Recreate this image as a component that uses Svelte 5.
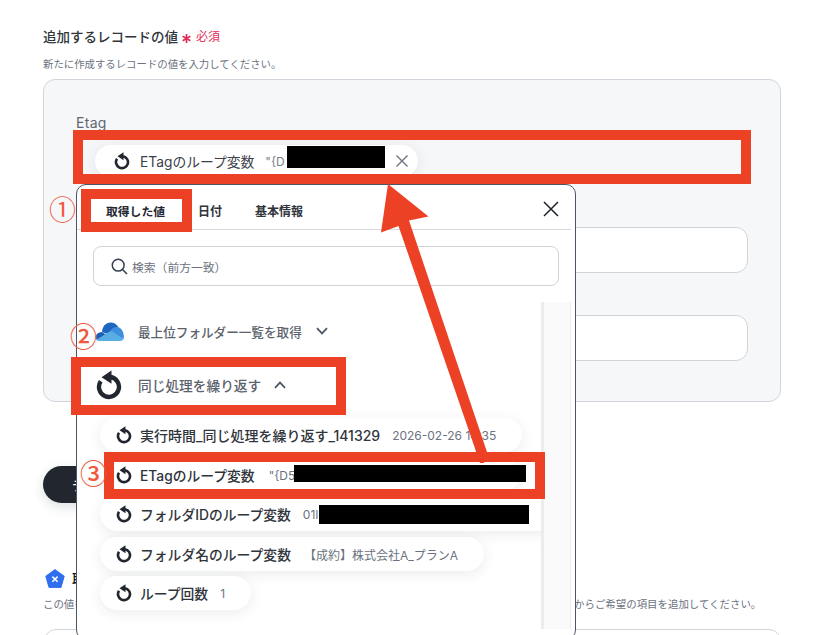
<script>
  const pills = [
    { name: '実行時間_同じ処理を繰り返す_141329', value: '2026-02-26 14:35', cls: 'p1' },
    { name: 'ETagのループ変数', value: '"{D5', cls: 'p2' },
    { name: 'フォルダIDのループ変数', value: '01I', cls: 'p3' },
    { name: 'フォルダ名のループ変数', value: '【成約】株式会社A_プランA', cls: 'p4' },
    { name: 'ループ回数', value: '1', cls: 'p5' }
  ];
</script>

{#snippet loop(size)}
  <svg class="loop" width={size} height={size} viewBox="0 0 24 24" aria-hidden="true">
    <path d="M13 5.600 A8 8 0 1 1 5.400 9" fill="none" stroke="#22262e" stroke-width="3.500"/>
    <path d="M14 0.400 V11 L6 5.700 Z" fill="#22262e"/>
  </svg>
{/snippet}

<div class="page">
  <h2 class="title">追加するレコードの値
    <svg class="star" width="9" height="9" viewBox="0 0 9 9"><path d="M4.500 0V9M.6 2.200 8.400 6.800M8.400 2.200 .6 6.800" stroke="#e0315c" stroke-width="1.700"/></svg>
    <span class="req">必須</span>
  </h2>
  <p class="sub">新たに作成するレコードの値を入力してください。</p>

  <section class="panel">
    <div class="label">Etag</div>
    <div class="field first">
      <div class="chip">
        {@render loop(18)}
        <span class="cname">ETagのループ変数</span>
        <span class="cval">"{'{'}D</span>
        <svg class="cx" width="14" height="14" viewBox="0 0 14 14"><path d="M1.500 1.500 12.500 12.500M12.500 1.500 1.500 12.500" stroke="#6b7280" stroke-width="1.400"/></svg>
      </div>
    </div>
    <div class="field second"></div>
    <div class="field third"></div>
  </section>

  <button class="primary">テスト</button>

  <div class="sect">
    <svg width="20" height="20" viewBox="0 0 20 20"><path d="M10 .6 19.200 7.200 16 18.400 4 18.400 .8 7.200Z" fill="#2f6fed" stroke="#2f6fed" stroke-linejoin="round" stroke-width="1"/><path d="M7.400 7.600 12.600 12.800M12.600 7.600 7.400 12.800" stroke="#fff" stroke-width="1.500"/></svg>
    <span>取得した値</span>
  </div>
  <p class="sub note">この値を他のオペレーションの設定に利用することができます。さらに多くの値を取得したい場合は、下記の一覧からご希望の項目を追加してください。</p>
  <div class="bottom"></div>

  <div class="modal">
    <div class="tabs">
      <span class="tab on">取得した値</span>
      <span class="tab t2">日付</span>
      <span class="tab t3">基本情報</span>
      <svg class="mx" width="16" height="16" viewBox="0 0 16 16"><path d="M1 1 15 15M15 1 1 15" stroke="#1f2329" stroke-width="1.500"/></svg>
    </div>
    <div class="search">
      <svg width="17" height="17" viewBox="0 0 17 17"><circle cx="7.200" cy="7.200" r="5.900" fill="none" stroke="#374151" stroke-width="1.500"/><path d="M11.500 11.500 16 16" stroke="#374151" stroke-width="1.600"/></svg>
      <span>検索（前方一致）</span>
    </div>
    <div class="scrollwrap">
      <div class="list">
        <div class="group g1">
          <svg width="29" height="19" viewBox="0 0 29 19"><path d="M11.500 11.800 7 9.900C7.200 5 10.600 .5 15.600 .5c3.400 0 6.200 1.800 7.800 4.700L17 9.500Z" fill="#1f66c1"/><path d="M7 9.900c-3.600 .1-6.500 2.600-6.500 5.200 0 1 .3 1.900 .8 2.700L13 14Z" fill="#1a5fb0"/><path d="M23.400 5.200c-3-.8-6.400 .4-8 3.800L17 10l6 4 5.600 3C29.600 12 27.500 6.600 23.400 5.200Z" fill="#3b8fdb"/><path d="M1.300 17.800c.8 .8 1.800 1.200 3.200 1.200h20.600c1.600 0 2.900-.7 3.500-2L16 8.800Z" fill="#59ade5"/></svg>
          <span class="gname">最上位フォルダー一覧を取得</span>
          <svg class="chev" width="12" height="8" viewBox="0 0 12 8"><path d="M1 1.200 6 6.400 11 1.200" fill="none" stroke="#4b5563" stroke-width="1.700"/></svg>
        </div>
        <div class="group g2">
          {@render loop(30)}
          <span class="gname">同じ処理を繰り返す</span>
          <svg class="chev" width="12" height="8" viewBox="0 0 12 8"><path d="M1 6.800 6 1.600 11 6.800" fill="none" stroke="#4b5563" stroke-width="1.700"/></svg>
        </div>
        {#each pills as p}
          <div class="pill {p.cls}">
            {@render loop(18)}
            <span class="pname">{p.name}</span>
            <span class="pval">{p.value}</span>
          </div>
        {/each}
      </div>
      <div class="track"></div>
    </div>
  </div>

  <div class="redact r1"></div>
  <div class="redact r2"></div>
  <div class="redact r3"></div>

  <div class="box b1"></div>
  <div class="box b2"></div>
  <div class="box b3"></div>
  <div class="box b4"></div>
  <span class="num n1">①</span>
  <span class="num n2">②</span>
  <span class="num n3">③</span>
  <svg class="arrow" width="816" height="635" viewBox="0 0 816 635">
    <path d="M388 184 L428.500 216.500 L409 220.500 L487 452 L484 463 L480 463 L398.500 226 L381 232.500 Z" fill="#ec4125"/>
  </svg>
</div>

<style>
  :global(body) { margin: 0; background: #fff; }
  .page {
    position: relative;
    width: 816px;
    height: 635px;
    overflow: hidden;
    box-sizing: border-box;
    padding: 26px 35px 0 43px;
    font-family: Inter, "Noto Sans CJK JP", sans-serif;
    color: #2b2f36;
  }
  .title { margin: 0; font-size: 13.5px; line-height: 20px; font-weight: 500; display: flex; align-items: center; color: #30343b; }
  .star { margin: 3px 5px 0 4px; flex: none; }
  .req { color: #e0315c; font-size: 12px; font-weight: 400; margin-top: 1px; }
  .sub { margin: 9px 0 0; font-size: 10.4px; line-height: 18px; color: #6b7280; }
  .panel {
    box-sizing: border-box;
    width: 738px;
    height: 323px;
    margin-top: 5px;
    padding: 33px 32px 0;
    background: #f6f7f9;
    border: 1px solid #d1d5db;
    border-radius: 12px;
  }
  .label { font-size: 14px; line-height: 20px; color: #5f6670; letter-spacing: .3px; }
  .field { box-sizing: border-box; width: 672px; height: 46px; background: #fff; border: 1px solid #d1d5db; border-radius: 12px; }
  .field.first { height: 45px; border: none; background: transparent; padding: 12px 0 0 19px; }
  .field.second { margin-top: 49px; }
  .field.third { margin-top: 42px; }
  .chip {
    display: flex; align-items: center; box-sizing: border-box;
    width: 323px; height: 32px; padding-left: 18px;
    background: #fff; border-radius: 16px;
    box-shadow: 0 2px 14px rgba(30, 40, 60, .09);
    position: relative;
  }
  .cname { margin-left: 9px; font-size: 13.8px; color: #3b4048; white-space: nowrap; }
  .cval { margin-left: 11px; font-size: 12px; color: #7b818a; }
  .cx { position: absolute; right: 9px; top: 9px; }
  .primary {
    display: block; margin-top: 64px; width: 160px; height: 37px; padding: 0 0 0 29px; text-align: left;
    border: 0; border-radius: 19px; background: #22262e; color: #fff;
    box-shadow: 0 4px 12px rgba(30, 40, 60, .15);
    font: 500 13px Inter, "Noto Sans CJK JP", sans-serif;
  }
  .sect { display: flex; align-items: center; gap: 7px; margin: 66px 0 0 2px; font-size: 13.5px; font-weight: 500; line-height: 20px; color: #111; }
  .note { margin-top: 7px; white-space: nowrap; font-size: 10.45px; }
  .bottom { width: 735px; height: 60px; margin: 15px 0 0 1px; border: 1px solid #d1d5db; border-radius: 12px; }

  .modal {
    position: absolute; left: 76px; top: 184px; width: 500px; height: 456px;
    box-sizing: border-box; background: #fff;
    border: 1px solid #4b5563; border-radius: 10px;
    padding-right: 4px;
  }
  .tabs {
    position: relative; display: flex; align-items: center; height: 44px;
    border-bottom: 1px solid #d5d9de; font-size: 12px; font-weight: 600; color: #30343b;
  }
  .tab { line-height: 16px; margin-top: 9px; }
  .tab.on { margin-left: 29px; color: #22262e; font-size: 11.8px; }
  .tab.t2 { margin-left: 33px; }
  .tab.t3 { margin-left: 33px; }
  .mx { position: absolute; right: 12px; top: 16px; }
  .search {
    display: flex; align-items: center; gap: 4px; box-sizing: border-box;
    width: 466px; height: 40px; margin: 16px 0 0 16px; padding-left: 17px;
    border: 1px solid #cfd4da; border-radius: 8px;
    font-size: 11.8px; color: #6b7280;
  }
  .scrollwrap { display: flex; margin-top: 16px; height: 327px; }
  .list { width: 464px; flex: none; overflow: hidden; display: flex; flex-direction: column; align-items: flex-start; }
  .track { width: 26px; background: #fafafa; border-left: 3px solid #ececec; border-right: 1px solid #ececec; flex: none; }
  .group { display: flex; align-items: center; font-weight: 500; color: #5b626c; }
  .gname { white-space: nowrap; }
  .g1 { height: 20px; margin-top: 19px; padding-left: 18px; font-size: 12.6px; }
  .g1 .gname { margin-left: 14px; }
  .g1 .chev { margin-left: 14px; }
  .g2 { height: 30px; margin-top: 29px; padding-left: 17px; font-size: 13.7px; }
  .g2 .gname { margin-left: 14px; }
  .g2 .chev { margin-left: 13px; }
  .loop { display: block; flex: none; }
  .pill {
    display: flex; align-items: center; box-sizing: border-box; height: 34px; flex: none;
    padding-left: 15px; margin-left: 23px; background: #fff; border-radius: 17px;
    box-shadow: 0 3px 14px rgba(30, 40, 60, .09);
    white-space: nowrap;
  }
  .pname { margin-left: 7px; font-size: 13.8px; font-weight: 500; color: #30343b; }
  .pval { margin-left: 12px; font-size: 12px; color: #6b7280; }
  .p1 { width: 422px; margin-top: 18px; }
  .p1 .pname { font-size: 14px; }
  .p2 { width: 420px; margin-top: 6px; }
  .p3 { width: 460px; margin-top: 5px; }
  .p4 { width: 384px; margin-top: 6px; }
  .p5 { width: 151px; margin-top: 5px; }
  .p2 .pval { margin-left: 14px; }
  .p4 .pval { margin-left: 13px; }

  .redact { position: absolute; background: #000; }
  .r1 { left: 287px; top: 146px; width: 98px; height: 22px; }
  .r2 { left: 294px; top: 465px; width: 232px; height: 17px; }
  .r3 { left: 319px; top: 505px; width: 210px; height: 19px; }

  .box { position: absolute; box-sizing: border-box; border: 10px solid #ec4125; }
  .b1 { left: 73px; top: 130px; width: 678px; height: 54px; }
  .b2 { left: 81px; top: 189px; width: 111px; height: 43px; }
  .b3 { left: 71px; top: 357px; width: 275px; height: 58px; }
  .b4 { left: 104px; top: 452px; width: 441px; height: 47px; }

  .num { position: absolute; font-family: "Noto Sans CJK JP", sans-serif; font-weight: 500; color: #ee5a3e; font-size: 27px; line-height: 27px; width: 27px; text-align: center; }
  .n1 { left: 49px; top: 195px; font-weight: 400; }
  .n2 { left: 70px; top: 322px; }
  .n3 { left: 80px; top: 459px; }
  .arrow { position: absolute; left: 0; top: 0; pointer-events: none; }
</style>
